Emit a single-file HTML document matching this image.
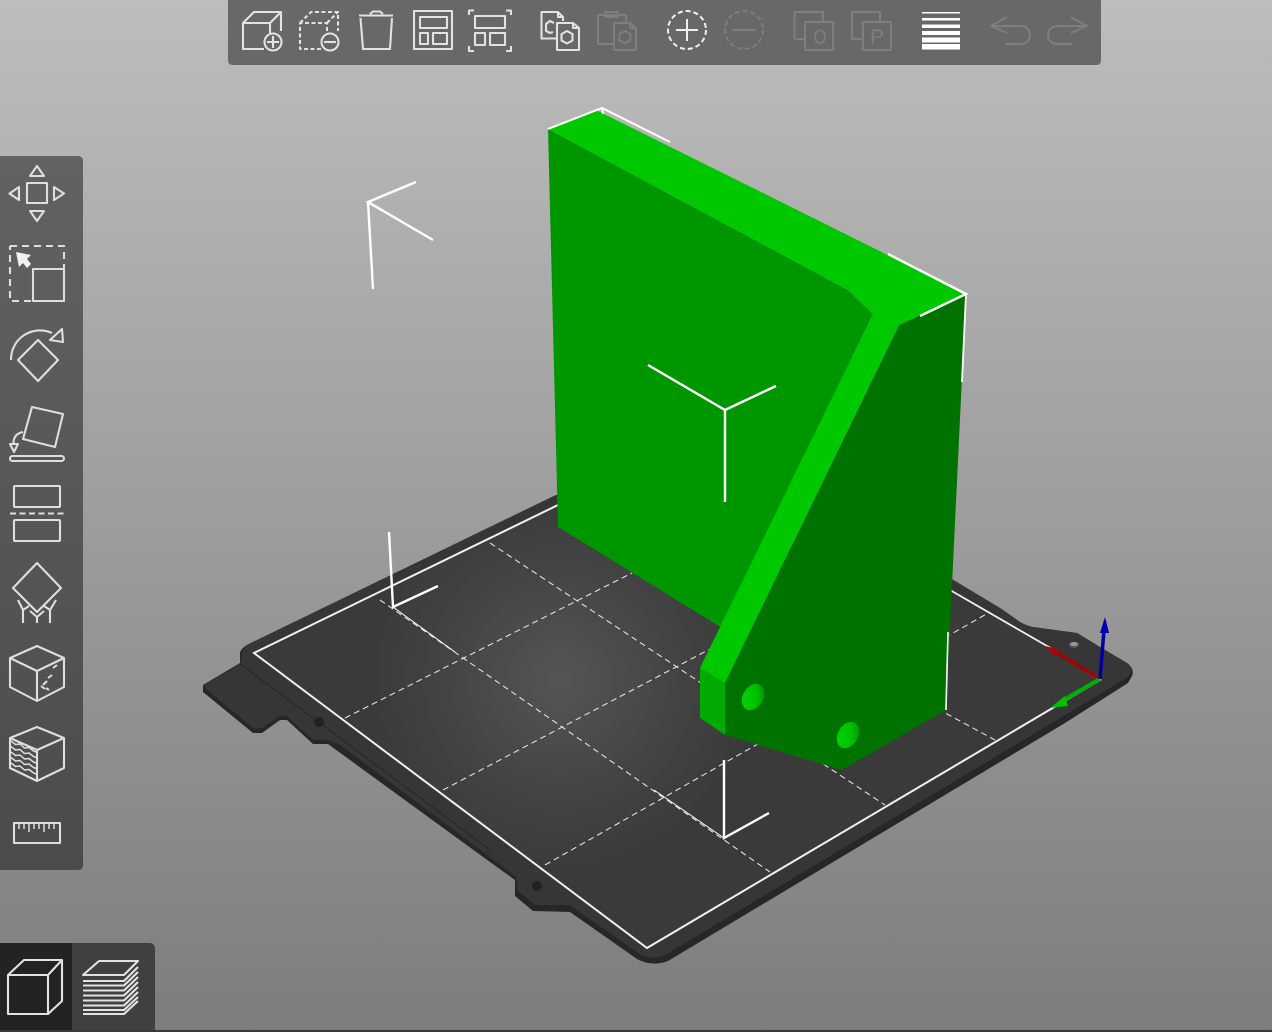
<!DOCTYPE html>
<html>
<head>
<meta charset="utf-8">
<style>
html,body{margin:0;padding:0;width:1272px;height:1032px;overflow:hidden;background:#999}
svg{display:block;position:absolute;left:0;top:0}
</style>
</head>
<body>
<svg width="1272" height="1032" viewBox="0 0 1272 1032" xmlns="http://www.w3.org/2000/svg">
<defs>
<linearGradient id="bg" x1="0" y1="0" x2="0" y2="1">
<stop offset="0" stop-color="#bdbdbd"/><stop offset="1" stop-color="#7d7d7d"/>
</linearGradient>
<linearGradient id="panel" x1="0" y1="0" x2="0" y2="1">
<stop offset="0" stop-color="#626262"/><stop offset="1" stop-color="#4b4b4b"/>
</linearGradient>
<radialGradient id="bed" gradientUnits="userSpaceOnUse" cx="560" cy="680" r="190">
<stop offset="0" stop-color="#555"/><stop offset="0.55" stop-color="#454545"/><stop offset="1" stop-color="#3a3a3a"/>
</radialGradient>
<linearGradient id="hole" x1="0" y1="1" x2="1" y2="0">
<stop offset="0" stop-color="#00d800"/><stop offset="0.6" stop-color="#00c000"/><stop offset="1" stop-color="#008a00"/>
</linearGradient>
<filter id="soft" x="-5%" y="-5%" width="110%" height="110%"><feGaussianBlur stdDeviation="0.35"/></filter>
</defs>
<rect width="1272" height="1032" fill="url(#bg)"/>

<!-- plate silhouette (side, darker) -->
<path d="M240 653Q241 647 253 642L556 495L950 578L1000 608L1020 622Q1027 626 1033 627L1077 633L1100 647L1127 663Q1135 669 1132 676L1128 683L1065 723L668 961Q652 967 637 959L570 912L533 911L515 896V880L490 862L328 744L313 744L287 720L280 720L262 733L253 733L203 692V685L240 663Z" fill="#272727"/>
<!-- plate top -->
<path d="M243 650Q244 646 253 642L556 495L950 578L1000 608L1020 622Q1027 626 1033 627L1077 633L1100 647L1127 663Q1134 668 1130 674L1125 679L1062 717L665 955Q651 961 638 953L570 905L535 905L517 890V878L490 857L340 745L328 740L313 740L287 716L280 716L262 728L254 729L205 688L204 685L240 664Z" fill="#363636"/>
<path d="M240 664L340 738L490 850" stroke="#2b2b2b" stroke-width="1.500" fill="none"/>
<ellipse cx="1074" cy="645" rx="5" ry="3" fill="#5a5a5a"/>
<ellipse cx="1074" cy="644" rx="4" ry="2" fill="#999"/>
<circle cx="319" cy="722" r="5" fill="#222"/>
<circle cx="537" cy="886" r="5" fill="#222"/>
<!-- print surface -->
<path d="M254 653L570 497L950 590L1047 646L1100 680L647 948Z" fill="url(#bed)"/>
<!-- grid -->
<g stroke="#e0e0e0" stroke-width="1.100" stroke-dasharray="6 4" fill="none">
<path d="M490 543L885 805"/><path d="M380 600L770 872"/><path d="M700 580L995 740"/>
<path d="M345 718L632 573"/><path d="M443 790L712 648"/><path d="M545 865L990 612"/>
</g>
<!-- plate border -->
<path d="M558 505L254 653L647 948L1100 680L1047 646" fill="none" stroke="#f0f0f0" stroke-width="2"/>
<path d="M950 590L1047 646" fill="none" stroke="#f0f0f0" stroke-width="1.800"/>

<!-- object -->
<path d="M548 129L848 290L873 314L722 628L558 527Z" fill="#009600"/>
<path d="M899 325L966 294L946 710L842 770L725 735L725 683Z" fill="#007200"/>
<path d="M700 668L725 683L725 735L700 718Z" fill="#00aa00"/>
<path d="M548 129L596 110L966 294L899 325L725 683L700 668L873 314L848 290Z" fill="#00c800"/>
<ellipse cx="753" cy="697" rx="10" ry="14" transform="rotate(30 753 697)" fill="url(#hole)"/>
<ellipse cx="848" cy="735" rx="10" ry="14" transform="rotate(30 848 735)" fill="url(#hole)"/>

<!-- selection box -->
<g stroke="#fff" fill="none" stroke-width="2.400">
<path d="M416 182L368 202L433 240M368 202L373 289"/>
<path d="M648 365L725 410L776 386M725 410L725 502"/>
<path d="M389 532L393 607L438 586"/>
<path d="M393 607L455 652" stroke-width="1"/>
<path d="M724 760L724 838L769 813"/>
<path d="M724 838L654 790" stroke-width="1"/>
<path d="M548 129L602 108L670 142M602 108L603 114" stroke-width="2"/>
<path d="M888 254L966 294L920 316"/>
<path d="M966 294L962 382" stroke-width="1.800"/>
<path d="M948 632L946 710" stroke-width="1.600"/>
</g>

<!-- axes -->
<path d="M1100 679L1056 652" stroke="#a80000" stroke-width="3.500"/>
<path d="M1059 650L1046 646L1054 656Z" fill="#b80000"/>
<path d="M1100 679L1062 701" stroke="#00b000" stroke-width="4"/>
<path d="M1065 696L1050 708L1068 706Z" fill="#00c000"/>
<path d="M1100 679L1104 630" stroke="#0000a0" stroke-width="3.500"/>
<path d="M1100 633L1105 617L1109 633Z" fill="#0000b0"/>

<!-- top toolbar -->
<path d="M228 0H1101V60Q1101 65 1096 65H233Q228 65 228 60Z" fill="#686868"/>
<g fill="none" stroke="#e2e2e2" stroke-width="2.100" stroke-linejoin="round" filter="url(#soft)">
<path d="M264 49H243V23H270V33M243 23L254 12H281V31M270 23L281 12"/>
<circle cx="273" cy="42" r="8.500"/><path d="M273 36V48M267 42H279"/>
<path d="M321 49H300V23H327V33M300 23L311 12H338V31M327 23L338 12" stroke-dasharray="4 2.500"/>
<circle cx="330" cy="42" r="8.500"/><path d="M324 42H336"/>
<path d="M359 15.500H393M370 14L373 11.500H380L383 14"/><path d="M360.500 18L363 49H390L392 18"/>
<rect x="414" y="11" width="38" height="38"/>
<rect x="420" y="17" width="27" height="11"/><rect x="420" y="33" width="8" height="11"/><rect x="433" y="33" width="14" height="11"/>
<path d="M469 15V10.500H474M506 10.500H511V15M511 46V51H506M474 51H469V46"/>
<rect x="475" y="16" width="30" height="12"/><rect x="475" y="33" width="10" height="12"/><rect x="490" y="33" width="15" height="12"/>
<path d="M556 38.500H541.500V12H558L563 17V21"/><path d="M558 12V17H563"/>
<path d="M554 23L550 21L546 24V31L550 33L553 32"/>
<path d="M557 23H573L579 28V50H557Z"/><path d="M573 23V28H579"/>
<path d="M567 31L572.500 34V40.500L567 43.500L561.500 40.500V34Z"/>
</g>
<g fill="none" stroke="#7e7e7e" stroke-width="2" stroke-linejoin="round">
<path d="M613 44H598V15H626V22"/><rect x="605" y="12" width="13" height="5"/>
<path d="M614 23H630L636 28V50H614Z"/><path d="M630 23V28H636"/>
<path d="M625 31L630.500 34V40.500L625 43.500L619.500 40.500V34Z"/>
<circle cx="744" cy="30" r="19" stroke-dasharray="5 3"/><path d="M732 30H756"/>
<path d="M805 39H794.500V12H823V22"/><rect x="805" y="22" width="28" height="28"/>
<path d="M863 39H852V12H880V22"/><rect x="863" y="22" width="28" height="28"/>
<path d="M1007 17L991 26L1007 33M991 26H1021A9 9 0 0 1 1021 44H1005"/>
<path d="M1071 17L1087 26L1071 33M1087 26H1057A9 9 0 0 0 1057 44H1072"/>
</g>
<text x="820" y="44" font-family="'Liberation Sans',sans-serif" font-size="21" fill="#7e7e7e" text-anchor="middle" transform="translate(164 0) scale(0.8 1)">O</text>
<text x="877" y="44" font-family="'Liberation Sans',sans-serif" font-size="21" fill="#7e7e7e" text-anchor="middle">P</text>
<circle cx="687" cy="30" r="19" fill="none" stroke="#f0f0f0" stroke-width="2" stroke-dasharray="5 3"/>
<path d="M676 30H698M687 19V41" stroke="#f0f0f0" stroke-width="2"/>
<g fill="#fff">
<rect x="922" y="12" width="38" height="1.500"/>
<rect x="922" y="18" width="38" height="2.500"/>
<rect x="922" y="24.500" width="38" height="3.500"/>
<rect x="922" y="31" width="38" height="4"/>
<rect x="922" y="37.500" width="38" height="5"/>
<rect x="922" y="44" width="38" height="5.500"/>
</g>

<!-- left panel -->
<path d="M0 156H78Q83 156 83 161V865Q83 870 78 870H0Z" fill="url(#panel)"/>
<g fill="none" stroke="#dedede" stroke-width="2.100" stroke-linejoin="round" filter="url(#soft)">
<path d="M30 176L37 166L44 176Z"/><rect x="27" y="183" width="20" height="20"/>
<path d="M19 187L9.500 193.500L19 200Z"/><path d="M54 187L64 193.500L54 200Z"/><path d="M30 211L37 221L44 211Z"/>
<path d="M10 246H64V268M31 301H10V246" stroke-dasharray="7 5"/>
<rect x="33" y="269" width="31" height="32"/>
<path d="M11 360A29 29 0 0 1 52 333"/><path d="M62 329L50 340L63 342Z"/>
<path d="M38 340L58 360L38 381L18 360Z"/>
<path d="M32 407L63 414L55 447L23 439Z"/>
<path d="M23 432Q13 434 13.500 444"/><path d="M10 444H18L14 452Z"/>
<rect x="10" y="456" width="54" height="5" rx="2.500"/>
<rect x="14" y="486" width="46" height="21" rx="1"/>
<path d="M10 513.500H64" stroke-dasharray="6 3.500"/>
<rect x="14" y="520" width="46" height="21" rx="1"/>
<path d="M37 563L61 588L37 612L13 588Z"/>
<path d="M18 600L23 610V623M29 606L23 610"/>
<path d="M30 611L37 617L44 611M37 617V623"/>
<path d="M56 600L50 610V623M44 606L50 610"/>
<path d="M37 646L64 658V687L37 701L10 687V658ZM10 658L37 671L64 658M37 671V701"/>
<path d="M37 727L64 738V768L37 781L10 768V738ZM10 738L37 750L64 738M37 750V781"/>
<rect x="14" y="823" width="46" height="20"/>
<path d="M19 823V829M24 823V829M29 823V832M34 823V829M39 823V829M44 823V832M49 823V829M54 823V829" stroke-width="1.500"/>
<path d="M57 665L53 668M52 675L48 678M47 681L43 685M41 686L45 689M49 690L46 688" stroke-width="2"/>
<g stroke-width="1.500">
<path d="M11 741L15.500 744.500L20 744L24.500 748L29 747.500L33.500 751L36 752"/>
<path d="M11 746.500L15.500 750L20 749.500L24.500 753.500L29 753L33.500 756.500L36 757.500"/>
<path d="M11 752L15.500 755.500L20 755L24.500 759L29 758.500L33.500 762L36 763"/>
<path d="M11 757.500L15.500 761L20 760.500L24.500 764.500L29 764L33.500 767.500L36 768.500"/>
<path d="M11 763L15.500 766.500L20 766L24.500 770L29 769.500L33.500 773L36 774"/>
</g>
</g>
<path d="M16 252L31 255L27 259L31 264L27 268L23 263L19 267Z" fill="#f0f0f0"/>

<!-- bottom tabs -->
<rect x="0" y="943" width="72" height="87" fill="#232323"/>
<path d="M72 943H149Q155 943 155 949V1030H72Z" fill="#404040"/>
<rect x="0" y="1030" width="1272" height="2" fill="#3a3a3a"/>
<g fill="none" stroke="#e2e2e2" stroke-width="2.100" stroke-linejoin="round" filter="url(#soft)">
<path d="M8 975H48V1014H8ZM8 975L24 960H62L48 975M62 960V1001L48 1014"/>
<path d="M83 975L99 961H138L124 975Z"/>
<path d="M83 981H124L138 967M83 985.500H124L138 972M83 990.500H124L138 977M83 995.500H124L138 982M83 1000.500H124L138 987M83 1005.500H124L138 992M83 1010H124L138 997M83 1014H124L138 1001"/>
</g>
</svg>
</body>
</html>
